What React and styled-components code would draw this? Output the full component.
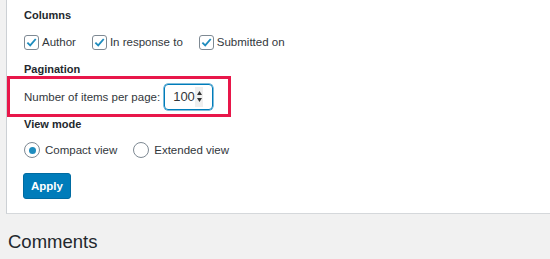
import React, { useState } from "react";
import styled, { createGlobalStyle } from "styled-components";

const GlobalStyle = createGlobalStyle`
  html, body {
    margin: 0;
    padding: 0;
    background: #f1f1f1;
    font-family: "Liberation Sans", Arial, sans-serif;
    color: #23282d;
  }
`;

const Page = styled.div`
  width: 550px;
  height: 259px;
  overflow: hidden;
`;

const Panel = styled.div`
  margin-left: 6px;
  background: #fff;
  border-left: 1px solid #ccd0d4;
  border-bottom: 1px solid #d5d8db;
  padding: 7px 0 14px 17px;
`;

const Legend = styled.div`
  font-size: 11px;
  font-weight: 700;
  line-height: 16px;
  color: #23282d;
  margin-top: ${(p) => p.top || 0}px;
`;

const Row = styled.div`
  display: flex;
  align-items: center;
  height: 20px;
  margin-top: ${(p) => p.top || 0}px;
`;

const Option = styled.label`
  display: flex;
  align-items: center;
  font-size: 11.5px;
  line-height: 20px;
  margin-right: ${(p) => p.gap || 12}px;
  color: #32373c;
  cursor: pointer;
`;

const Box = styled.span`
  width: 13px;
  height: 13px;
  border: 1px solid #7e8993;
  border-radius: 3px;
  background: #fff;
  margin-right: 3px;
  display: flex;
  align-items: center;
  justify-content: center;
`;

const Radio = styled.span`
  width: 14px;
  height: 14px;
  border: 1px solid #7e8993;
  border-radius: 50%;
  background: #fff;
  margin-right: 5px;
  display: flex;
  align-items: center;
  justify-content: center;
  &::after {
    content: "";
    width: 7px;
    height: 7px;
    border-radius: 50%;
    background: ${(p) => (p.checked ? "#1e8cbe" : "transparent")};
  }
`;

const Highlight = styled.div`
  box-sizing: border-box;
  margin-left: -17px;
  margin-top: -1px;
  width: 224px;
  height: 41px;
  border: 3px solid #e8174a;
  display: flex;
  align-items: center;
  padding-left: 14px;
  font-size: 11.5px;
  color: #32373c;
`;

const NumberBox = styled.div`
  margin-left: 4px;
  width: 49px;
  height: 26px;
  border: 1px solid #007cba;
  box-shadow: 0 0 0 0.5px #007cba;
  border-radius: 4px;
  display: flex;
  align-items: center;
  justify-content: space-between;
  padding: 0 9px 0 8px;
  box-sizing: border-box;
  font-size: 13px;
  color: #32373c;
`;

const Spinner = styled.span`
  width: 9px;
  height: 20px;
  background: #efefef;
  display: flex;
  flex-direction: column;
  align-items: center;
  justify-content: center;
  gap: 3px;
`;

const Button = styled.button`
  display: block;
  margin-top: 13px;
  margin-left: -1px;
  height: 26px;
  width: 48px;
  padding: 0;
  background: #007cba;
  border: 1px solid #006ba1;
  border-radius: 3px;
  color: #fff;
  font-family: inherit;
  font-size: 11.5px;
  font-weight: 700;
  cursor: pointer;
`;

const Heading = styled.h1`
  margin: 17px 0 0 8px;
  font-size: 18.5px;
  font-weight: 400;
  line-height: 22px;
  color: #23282d;
`;

const Check = () => (
  <svg width="11" height="11" viewBox="0 0 12 12">
    <path d="M1.5 6.2 L4.6 9.2 L10.6 2.2" fill="none" stroke="#1e8cbe" strokeWidth="2" />
  </svg>
);

const Arrow = ({ down }) => (
  <svg width="5" height="4" viewBox="0 0 5 4">
    <path d={down ? "M0 0 H5 L2.5 4 Z" : "M0 4 H5 L2.5 0 Z"} fill="#333" />
  </svg>
);

export default function App() {
  const [mode, setMode] = useState("compact");
  return (
    <Page>
      <GlobalStyle />
      <Panel>
        <Legend>Columns</Legend>
        <Row top={9}>
          <Option gap={16}>
            <Box><Check /></Box>Author
          </Option>
          <Option gap={16}>
            <Box><Check /></Box>In response to
          </Option>
          <Option>
            <Box><Check /></Box>Submitted on
          </Option>
        </Row>
        <Legend top={9}>Pagination</Legend>
        <Highlight>
          Number of items per page:
          <NumberBox>
            100
            <Spinner>
              <Arrow />
              <Arrow down />
            </Spinner>
          </NumberBox>
        </Highlight>
        <Legend top={-1}>View mode</Legend>
        <Row top={8}>
          <Option gap={16} onClick={() => setMode("compact")}>
            <Radio checked={mode === "compact"} />Compact view
          </Option>
          <Option onClick={() => setMode("extended")}>
            <Radio checked={mode === "extended"} />Extended view
          </Option>
        </Row>
        <Button>Apply</Button>
      </Panel>
      <Heading>Comments</Heading>
    </Page>
  );
}
